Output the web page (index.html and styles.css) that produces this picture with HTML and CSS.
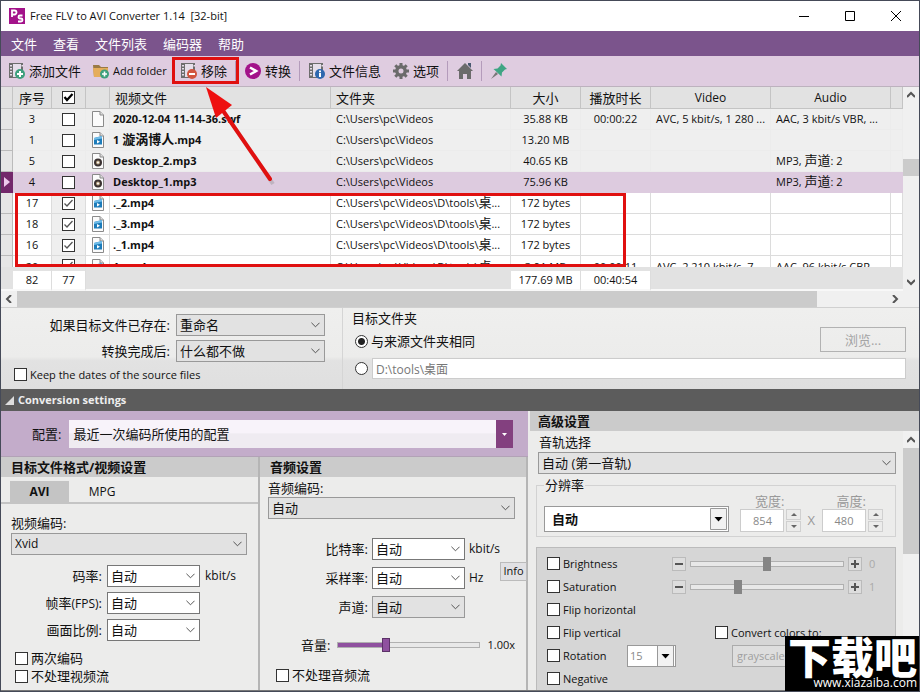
FILE: index.html
```html
<!DOCTYPE html>
<html lang="zh-CN">
<head>
<meta charset="utf-8">
<title>Free FLV to AVI Converter 1.14 [32-bit]</title>
<link rel="stylesheet" href="styles.css">
</head>
<body>
<svg class="defs" aria-hidden="true">
  <symbol id="i-page" viewBox="0 0 12 16"><path d="M.5.5h7.5l3.500 3.500v11.500H.5z" fill="#fbfbfb" stroke="#8a8a8a"/><path d="M8 .5v3.500h3.500" fill="#ddd" stroke="#8a8a8a"/></symbol>
  <symbol id="i-video" viewBox="0 0 12 16"><use href="#i-page"/><path d="M2 6l8-2v8.500H2z" fill="#1d7cba"/><path d="M2 6l8-2v2.500L2 8z" fill="#6fbce8"/><path d="M5 8v3.500l3-1.800z" fill="#fff"/></symbol>
  <symbol id="i-audio" viewBox="0 0 12 16"><use href="#i-page"/><circle cx="6" cy="9.500" r="4" fill="#3a3231"/><circle cx="6" cy="9.500" r="2" fill="#b9a27f"/><circle cx="6" cy="9.500" r="1" fill="#fff"/></symbol>
  <symbol id="i-film" viewBox="0 0 16 16"><path d="M0 0h14v15H0z" fill="#6d6d6d"/><path d="M4 1h8v13H4z" fill="#e6deea"/><path d="M1 2h2v1.500H1zM1 5h2v1.500H1zM1 8h2v1.500H1zM1 11h2v1.500H1zM12.500 2H14v1.500h-1.500z" fill="#e6deea"/></symbol>
</svg>
<div class="window">
  <header class="titlebar">
    <svg class="logo" viewBox="0 0 16 16" aria-hidden="true"><path d="M0 0h16v16H0z" fill="#a3128a"/><path d="M3 9V2.500h2.500a2 2 0 0 1 0 4H3M13.500 7.500H11a1.400 1.400 0 0 0 0 3h1a1.400 1.400 0 0 1 0 3H9" fill="none" stroke="#fff" stroke-width="1.800"/></svg>
    <h1 class="title">Free FLV to AVI Converter 1.14&nbsp; [32-bit]</h1>
    <div class="caption">
      <button aria-label="最小化"><svg viewBox="0 0 10 10"><path d="M0 5.500h10"/></svg></button>
      <button aria-label="最大化"><svg viewBox="0 0 10 10"><path d="M.5.5h9v9h-9z"/></svg></button>
      <button aria-label="关闭"><svg viewBox="0 0 10 10"><path d="M0 0l10 10M10 0L0 10"/></svg></button>
    </div>
  </header>
  <nav class="menu">
    <button>文件</button><button>查看</button><button>文件列表</button><button>编码器</button><button>帮助</button>
  </nav>
  <div class="toolbar">
    <button><svg viewBox="0 0 16 16"><use href="#i-film"/><circle cx="11" cy="11" r="5" fill="#3da07d"/><path d="M11 8v6M8 11h6" stroke="#fff" stroke-width="2"/></svg>添加文件</button>
    <button class="small folder"><svg viewBox="0 0 16 16"><path d="M0 2h6l2 2h7v10H1z" fill="#9b7a45"/><path d="M0 5h15v9H1z" fill="#e5ad5b"/><circle cx="11.500" cy="11" r="4.500" fill="#3da07d"/><path d="M11.500 8.500v5M9 11h5" stroke="#fff" stroke-width="1.600"/></svg>Add folder</button>
    <button class="marked"><svg viewBox="0 0 16 16"><use href="#i-film"/><circle cx="11" cy="11" r="5" fill="#d2553f"/><path d="M8 11h6" stroke="#fff" stroke-width="2"/></svg>移除
      <svg class="arrow" viewBox="0 0 80 110" aria-hidden="true"><path d="M17 18L72 99" stroke="#888" stroke-opacity=".35" stroke-width="4"/><path d="M16 17L69 94" stroke="#e01010" stroke-width="4" stroke-linecap="round"/><path d="M5 2l26 18-16 13z" fill="#ee1010"/></svg></button>
    <i class="sep"></i>
    <button><svg viewBox="0 0 16 16"><circle cx="8" cy="8" r="8" fill="#a3128a"/><path d="M5 4.500l6 3.500-6 3.500" fill="none" stroke="#fff" stroke-width="2.600"/></svg>转换</button>
    <i class="sep"></i>
    <button><svg viewBox="0 0 16 16"><use href="#i-film"/><circle cx="11" cy="11" r="5" fill="#2e67ae"/><path d="M11 7.500v1.800M11 10v4" stroke="#fff" stroke-width="2"/></svg>文件信息</button>
    <button><svg viewBox="0 0 16 16"><circle cx="8" cy="8" r="4.200" fill="none" stroke="#6b6b6b" stroke-width="3.400"/><path d="M8 0v3M8 13v3M0 8h3M13 8h3M2.300 2.300l2.200 2.200M11.500 11.500l2.200 2.200M2.300 13.700l2.200-2.200M11.500 4.500l2.200-2.200" stroke="#6b6b6b" stroke-width="3"/></svg>选项</button>
    <i class="sep"></i>
    <button aria-label="主页"><svg viewBox="0 0 16 16"><path d="M8 0l8 8h-2v8h-4v-5H6v5H2V8H0z" fill="#6b6b6b"/><path d="M11 0h3v5l-3-3z" fill="#48596f"/></svg></button>
    <i class="sep"></i>
    <button aria-label="固定"><svg viewBox="0 0 16 16"><path d="M0 16l5-7 2 2z" fill="#777"/><path d="M10 0l6 6-2 .5-3 3-.5 4L2.500 6l4-.500 3-3z" fill="#3fa584"/></svg></button>
  </div>

  <section class="files">
    <div class="list">
      <table>
        <colgroup><col class="c-mark"><col class="c-no"><col class="c-check"><col class="c-icon"><col class="c-file"><col class="c-folder"><col class="c-size"><col class="c-time"><col class="c-av"><col class="c-av"><col></colgroup>
        <thead><tr><th></th><th>序号</th><th><input type="checkbox" class="strong" checked aria-label="全选"></th><th></th><th class="left">视频文件</th><th class="left">文件夹</th><th>大小</th><th>播放时长</th><th class="small">Video</th><th class="small">Audio</th><th></th></tr></thead>
        <tbody>
          <tr class="off"><td></td><td>3</td><td><input type="checkbox" aria-label="3"></td><td><svg><use href="#i-page"/></svg></td><td class="name">2020-12-04 11-14-36.swf</td><td class="left">C:\Users\pc\Videos</td><td>35.88 KB</td><td>00:00:22</td><td class="left">AVC, 5 kbit/s, 1 280 ...</td><td class="left">AAC, 3 kbit/s VBR, ...</td><td></td></tr>
          <tr class="off"><td></td><td>1</td><td><input type="checkbox" aria-label="1"></td><td><svg><use href="#i-video"/></svg></td><td class="name">1 <span class="cjk">漩涡博人</span>.mp4</td><td class="left">C:\Users\pc\Videos</td><td>13.20 MB</td><td></td><td></td><td></td><td></td></tr>
          <tr class="off"><td></td><td>5</td><td><input type="checkbox" aria-label="5"></td><td><svg><use href="#i-audio"/></svg></td><td class="name">Desktop_2.mp3</td><td class="left">C:\Users\pc\Videos</td><td>40.65 KB</td><td></td><td></td><td class="left">MP3, <span class="cjk">声道</span>: 2</td><td></td></tr>
          <tr class="current"><td></td><td>4</td><td><input type="checkbox" aria-label="4"></td><td><svg><use href="#i-audio"/></svg></td><td class="name">Desktop_1.mp3</td><td class="left">C:\Users\pc\Videos</td><td>75.96 KB</td><td></td><td></td><td class="left">MP3, <span class="cjk">声道</span>: 2</td><td></td></tr>
          <tr><td></td><td>17</td><td><input type="checkbox" checked aria-label="17"></td><td><svg><use href="#i-video"/></svg></td><td class="name">._2.mp4</td><td class="left">C:\Users\pc\Videos\D\tools\<span class="cjk">桌</span>...</td><td>172 bytes</td><td></td><td></td><td></td><td></td></tr>
          <tr><td></td><td>18</td><td><input type="checkbox" checked aria-label="18"></td><td><svg><use href="#i-video"/></svg></td><td class="name">._3.mp4</td><td class="left">C:\Users\pc\Videos\D\tools\<span class="cjk">桌</span>...</td><td>172 bytes</td><td></td><td></td><td></td><td></td></tr>
          <tr><td></td><td>16</td><td><input type="checkbox" checked aria-label="16"></td><td><svg><use href="#i-video"/></svg></td><td class="name">._1.mp4</td><td class="left">C:\Users\pc\Videos\D\tools\<span class="cjk">桌</span>...</td><td>172 bytes</td><td></td><td></td><td></td><td></td></tr>
          <tr class="cut"><td></td><td><div>20</div></td><td><div><input type="checkbox" checked aria-label="20"></div></td><td><div><svg><use href="#i-video"/></svg></div></td><td class="name"><div>1.mp4</div></td><td class="left"><div>C:\Users\pc\Videos\D\tools\<span class="cjk">桌</span></div></td><td><div>3.91 MB</div></td><td><div>00:00:11</div></td><td class="left"><div>AVC, 2 210 kbit/s, 7...</div></td><td class="left"><div>AAC, 96 kbit/s CBR, ...</div></td><td></td></tr>
        </tbody>
        <tfoot><tr><td></td><td class="sum">82</td><td class="sum">77</td><td></td><td></td><td></td><td class="sum">177.69 MB</td><td class="sum">00:40:54</td><td></td><td></td><td></td></tr></tfoot>
      </table>
      <div class="row-mark"></div>
      <div class="hscroll"><svg viewBox="0 0 8 8"><path d="M6 0L2 4l4 4"/></svg><i></i><b></b><svg viewBox="0 0 8 8"><path d="M2 0l4 4-4 4"/></svg></div>
    </div>
    <div class="vscroll"><svg viewBox="0 0 8 8"><path d="M0 6l4-4 4 4"/></svg><i></i><b></b><svg viewBox="0 0 8 8"><path d="M0 2l4 4 4-4"/></svg></div>
  </section>

  <section class="output">
    <div class="actions">
      <label for="exists">如果目标文件已存在:</label><select id="exists"><option>重命名</option></select>
      <label for="after">转换完成后:</label><select id="after"><option>什么都不做</option></select>
      <label class="check small wide"><input type="checkbox">Keep the dates of the source files</label>
    </div>
    <div class="target">
      <div class="target-top">
        <div><h2>目标文件夹</h2><label class="check"><input type="radio" name="dir" checked>与来源文件夹相同</label></div>
        <button class="browse" disabled>浏览...</button>
      </div>
      <div class="path-row"><input type="radio" name="dir" aria-label="自定义文件夹"><input type="text" class="path" value="D:\tools\桌面" aria-label="路径"></div>
    </div>
  </section>

  <button class="settings-bar small"><svg viewBox="0 0 9 9"><path d="M9 0v9H0z"/></svg>Conversion settings</button>

  <main class="settings">
    <div class="main-col">
      <div class="profile">
        <label for="profile">配置:</label><select id="profile"><option>最近一次编码所使用的配置</option></select>
      </div>
      <div class="panes">
        <section class="pane video">
          <h2>目标文件格式/视频设置</h2>
          <div class="tabs latin"><button class="on">AVI</button><button>MPG</button></div>
          <div class="pane-body">
            <label for="vcodec">视频编码:</label>
            <select id="vcodec" class="full latin"><option>Xvid</option></select>
            <div class="fields">
              <label for="rate">码率:</label><select id="rate" class="white"><option>自动</option></select><span class="latin">kbit/s</span>
              <label for="fps">帧率<span class="latin">(FPS)</span>:</label><select id="fps" class="white"><option>自动</option></select><span></span>
              <label for="ratio">画面比例:</label><select id="ratio" class="white"><option>自动</option></select><span></span>
            </div>
            <label class="check"><input type="checkbox">两次编码</label>
            <label class="check"><input type="checkbox">不处理视频流</label>
          </div>
        </section>
        <section class="pane audio">
          <h2>音频设置</h2>
          <div class="pane-body">
            <label for="acodec">音频编码:</label>
            <select id="acodec" class="full"><option>自动</option></select>
            <div class="with-info">
              <div class="fields">
                <label for="abr">比特率:</label><select id="abr" class="white"><option>自动</option></select><span class="latin">kbit/s</span>
                <label for="hz">采样率:</label><select id="hz" class="white"><option>自动</option></select><span class="latin">Hz</span>
                <label for="ch">声道:</label><select id="ch"><option>自动</option></select><span></span>
              </div>
              <button class="info small">Info</button>
            </div>
            <div class="volume"><label for="vol">音量:</label><input id="vol" type="range" value="33"><span class="small">1.00x</span></div>
            <label class="check"><input type="checkbox">不处理音频流</label>
          </div>
        </section>
      </div>
    </div>
    <section class="advanced">
      <h2>高级设置</h2>
      <div class="adv-scroll">
        <div class="adv-body">
          <label for="track">音轨选择</label>
          <select id="track" class="full"><option>自动 (第一音轨)</option></select>
          <fieldset class="resolution">
            <legend>分辨率</legend>
            <select class="drop bold" aria-label="分辨率"><option>自动</option></select>
            <div class="dim"><label for="w">宽度:</label><div class="small"><input id="w" type="text" value="854" disabled><span class="spin"><button disabled aria-label="增加宽度"><svg viewBox="0 0 6 3"><path d="M0 3l3-3 3 3z"/></svg></button><button disabled aria-label="减少宽度"><svg viewBox="0 0 6 3"><path d="M0 0l3 3 3-3z"/></svg></button></span></div></div>
            <span class="times">X</span>
            <div class="dim"><label for="h">高度:</label><div class="small"><input id="h" type="text" value="480" disabled><span class="spin"><button disabled aria-label="增加高度"><svg viewBox="0 0 6 3"><path d="M0 3l3-3 3 3z"/></svg></button><button disabled aria-label="减少高度"><svg viewBox="0 0 6 3"><path d="M0 0l3 3 3-3z"/></svg></button></span></div></div>
          </fieldset>
          <div class="effects small">
            <div class="row"><label class="check"><input type="checkbox">Brightness</label><div class="adjust"><button disabled aria-label="减少"><svg viewBox="0 0 8 8"><path d="M0 4h8"/></svg></button><input type="range" value="50" disabled aria-label="Brightness"><button disabled aria-label="增加"><svg viewBox="0 0 8 8"><path d="M0 4h8M4 0v8"/></svg></button><span>0</span></div></div>
            <div class="row"><label class="check"><input type="checkbox">Saturation</label><div class="adjust"><button disabled aria-label="减少"><svg viewBox="0 0 8 8"><path d="M0 4h8"/></svg></button><input type="range" value="30" disabled aria-label="Saturation"><button disabled aria-label="增加"><svg viewBox="0 0 8 8"><path d="M0 4h8M4 0v8"/></svg></button><span>1</span></div></div>
            <div class="row"><label class="check"><input type="checkbox">Flip horizontal</label></div>
            <div class="row"><label class="check"><input type="checkbox">Flip vertical</label><label class="check second"><input type="checkbox">Convert colors to:</label></div>
            <div class="row"><label class="check"><input type="checkbox">Rotation</label><select class="drop angle" aria-label="Rotation"><option>15</option></select><select class="colors" disabled aria-label="Convert colors to"><option>grayscale</option></select></div>
            <div class="row"><label class="check"><input type="checkbox">Negative</label></div>
          </div>
        </div>
        <div class="vscroll adv-bar"><svg viewBox="0 0 8 8"><path d="M0 6l4-4 4 4"/></svg><b></b></div>
      </div>
    </section>
  </main>
  <div class="watermark"><strong>下载吧</strong><span>www.xiazaiba.com</span></div>
</div>
</body>
</html>
```
FILE: styles.css
```css
* { box-sizing: border-box; }
body {
  margin: 0;
  font: 13px/16px "Open Sans", "Noto Sans CJK SC", sans-serif;
  color: #111;
  background: #ececeb;
}
button, input, select { font: inherit; color: inherit; margin: 0; }
button { border: 0; padding: 0; background: none; }
h1, h2 { margin: 0; font-size: inherit; }
svg { display: block; }
.defs { position: absolute; width: 0; height: 0; }
.latin { font-size: 12px; }
.small { font-size: 11px; }
.cjk { font-size: 13px; line-height: 12px; }
.window {
  position: relative;
  display: flex;
  flex-direction: column;
  min-height: 100vh;
  border: 1px solid #454a58;
  overflow: hidden;
}

.titlebar { display: flex; align-items: center; height: 30px; padding-left: 8px; background: #fff; }
.logo { width: 16px; height: 16px; margin-right: 5px; }
.title { flex: 1; font-size: 11px; font-weight: 400; }
.caption { display: flex; }
.caption button { display: grid; place-items: center; width: 46px; height: 30px; }
.caption svg { width: 10px; height: 10px; fill: none; stroke: #000; overflow: visible; }
.menu { display: flex; height: 25px; padding-left: 2px; background: #7b548c; color: #fff; }
.menu button { padding: 0 8px; }
.toolbar { display: flex; align-items: center; height: 31px; padding-left: 2px; background: #dfcce0; border-bottom: 1px solid #bdb2be; }
.toolbar button { position: relative; display: flex; align-items: center; gap: 4px; height: 26px; padding: 0 6px; white-space: nowrap; }
.toolbar .folder { min-width: 88px; }
.toolbar button > svg { width: 16px; height: 16px; }
.sep { width: 1px; height: 20px; margin: 0 3px 0 2px; background: #b49bbb; }
.marked::after { content: ""; position: absolute; inset: -1px -6px 0 -3px; border: 3px solid #e01010; }
.toolbar .marked .arrow { position: absolute; left: 26px; top: 27px; width: 80px; height: 110px; fill: none; z-index: 2; }

.files { display: flex; border-bottom: 1px solid #d0d0d0; }
.list { position: relative; flex: 1; min-width: 0; }
table { width: 100%; border-collapse: separate; border-spacing: 0; table-layout: fixed; background: #e2e2e2; }
.c-mark { width: 12px; }
.c-no { width: 39px; }
.c-check { width: 34px; }
.c-icon { width: 24px; }
.c-file { width: 221px; }
.c-folder { width: 180px; }
.c-size, .c-time { width: 70px; }
.c-av { width: 120px; }
th, td { padding: 0; text-align: center; white-space: nowrap; border-right: 1px solid #dcdcdc; border-bottom: 1px solid #dcdcdc; }
th { height: 22px; font-weight: 400; background: #e2e2e2; border-color: #c4c4c4; }
th.small { font-size: 12px; }
td { height: 21px; font-size: 11px; line-height: 16px; background: #fff; }
th.left, td.left { text-align: left; padding-left: 5px; }
td.name { text-align: left; padding-left: 3px; font-weight: 700; }
td svg { width: 12px; height: 16px; margin: 0 auto; }
td input, th input { display: block; margin: 0 auto; }
tbody td:first-child { background: #e6e6e6; border-color: #bbb; }
tbody td:nth-child(3), .off td { background: #efefef; }
.off td { border-color: #ececec; }
.current td, .current td:nth-child(3) { background: #ddcbdf; border-color: #ddcbdf; }
.current td:first-child { background: #73286b; border-color: #73286b; position: relative; }
.current td:first-child::before { content: ""; position: absolute; left: 3px; top: 5px; border: 5px solid transparent; border-left: 6px solid #eec9ec; border-right: 0; }
.cut td { height: 11px; border-bottom: 0; }
.cut div { height: 11px; padding-top: 3px; overflow: hidden; }
tfoot td { height: 24px; background: #e2e2e2; border: 0; border-bottom: 2px solid #f8f8f8; }
tfoot .sum { background: #fff; border-top: 4px solid #e2e2e2; border-right: 1px solid #ddd; }
.row-mark { position: absolute; left: 14px; right: 277px; top: 106px; height: 74px; border: 3px solid #e01010; }
.hscroll { display: flex; align-items: center; height: 16px; background: #f0f0f0; }
.hscroll i { flex: 797; height: 16px; background: #cbcbcb; }
.hscroll b { flex: 70; }
.hscroll svg, .vscroll svg { width: 8px; height: 8px; margin: 4px; fill: none; stroke: #555; stroke-width: 2; flex: none; }
.vscroll { display: flex; flex-direction: column; width: 16px; background: #f0f0f0; }
.vscroll i { flex: 1; }
.files .vscroll { padding-bottom: 17px; background: linear-gradient(#cbcbcb, #cbcbcb) 0 72px / 16px 17px no-repeat #f0f0f0; }

input[type="checkbox"], input[type="radio"] { appearance: none; flex: none; width: 13px; height: 13px; border: 1px solid #333; background: #fff; }
input[type="radio"] { border-radius: 50%; }
input[type="radio"]:checked { background: radial-gradient(circle, #222 3px, #fff 4px); }
input[type="checkbox"]:checked { background: #fff url("data:image/svg+xml,%3Csvg xmlns='http://www.w3.org/2000/svg' viewBox='0 0 11 11'%3E%3Cpath d='M1.500 5.500l2.500 2.500 5.500-6' fill='none' stroke='%23555' stroke-width='1.300'/%3E%3C/svg%3E"); }
input.strong:checked { background-image: url("data:image/svg+xml,%3Csvg xmlns='http://www.w3.org/2000/svg' viewBox='0 0 11 11'%3E%3Cpath d='M1.500 5l2.500 3 5.500-6' fill='none' stroke='%23000' stroke-width='2.200'/%3E%3C/svg%3E"); }
.check { display: flex; align-items: center; gap: 3px; white-space: nowrap; }
select {
  appearance: none;
  height: 22px;
  padding: 0 20px 0 3px;
  border: 1px solid #999;
  border-radius: 0;
  background: #e2e2e2 url("data:image/svg+xml,%3Csvg xmlns='http://www.w3.org/2000/svg' viewBox='0 0 10 6'%3E%3Cpath d='M.5.5L5 5 9.500.5' fill='none' stroke='%23444'/%3E%3C/svg%3E") right 4px center / 9px 6px no-repeat;
}
.white { background-color: #fff; border-color: #777; }
.full { width: 100%; }

.output { display: flex; background: linear-gradient(#efefee, #ececeb 60%, #e2e2e2 65%, #dfdfdf); }
.actions { display: grid; grid-template-columns: 162px 149px; gap: 4px 6px; align-content: start; align-items: center; padding: 6px 17px 6px 7px; border-right: 1px solid #d5d5d5; }
.actions > label { text-align: right; }
.actions .wide { grid-column: 1 / -1; padding-left: 6px; height: 17px; }
.target { flex: 1; padding: 2px 13px 9px 9px; }
.target-top { display: flex; justify-content: space-between; align-items: flex-end; }
.target h2 { font-weight: 400; line-height: 16px; margin-bottom: 7px; }
.target .check { margin-bottom: 3px; }
.target .check, .path-row { padding-left: 3px; }
.browse { width: 86px; height: 25px; border: 1px solid #b2b2b2; color: #a4a4a4; }
.path-row { display: flex; align-items: center; gap: 4px; padding-top: 6px; }
.path { flex: 1; height: 21px; padding: 0 3px; border: 1px solid #ccc; background: #fff; color: #777; font-size: 12px; }

.settings-bar { display: flex; align-items: center; gap: 4px; height: 22px; padding-left: 4px; background: #5c5c5c; color: #eee; font-weight: 700; }
.settings-bar svg { width: 9px; height: 9px; fill: #ddd; }
.settings { flex: 1; display: grid; grid-template-columns: 527fr 391fr; border-bottom: 1px solid #777; }
.settings h2 { height: 20px; padding-left: 10px; background: #cbcbcb; line-height: 20px; font-size: 13px; }
.main-col { display: flex; flex-direction: column; min-width: 0; }
.profile { display: flex; align-items: center; gap: 8px; height: 46px; padding: 0 15px 0 31px; background: #c3acca; border-bottom: 1px solid #b2a2b6; }
.profile select { flex: 1; height: 28px; border: 0; padding-left: 4px; background: url("data:image/svg+xml,%3Csvg xmlns='http://www.w3.org/2000/svg' viewBox='0 0 17 28'%3E%3Cpath d='M0 0h17v28H0z' fill='%2383407f'/%3E%3Cpath d='M6 13h5l-2.500 3z' fill='%23fff'/%3E%3C/svg%3E") right / 17px 28px no-repeat, linear-gradient(#f8f3fa 45%, #efebf1 50%); }
.panes { flex: 1; display: grid; grid-template-columns: 259fr 268fr; }
.pane { border-right: 2px solid #b5b5b5; min-width: 0; }
.tabs { display: flex; margin-top: 4px; padding-left: 9px; border-bottom: 2px solid #c4c4c4; }
.tabs button { width: 59px; height: 21px; }
.tabs button + button { width: 66px; }
.tabs .on { background: #c4c4c4; font-weight: 700; }
.pane-body { padding: 0 11px 0 10px; }
.pane-body > label:first-child { display: block; padding-top: 11px; margin-bottom: 2px; }
.fields { display: grid; grid-template-columns: 91px 93px 1fr; gap: 5px; align-items: center; margin: 10px 0 8px; }
.fields label { text-align: right; white-space: nowrap; }
.video .check { height: 18px; padding-left: 4px; }
.audio .pane-body { padding: 0 11px 0 8px; }
.audio .pane-body > label:first-child { padding-top: 3px; margin-bottom: 1px; }
.audio .fields { grid-template-columns: 100px 93px 1fr; gap: 7px 4px; margin: 19px 0; flex: 1; }
.with-info { display: flex; align-items: center; margin-right: -6px; }
.info { width: 27px; height: 19px; margin-bottom: 14px; border: 1px solid #bbb; background: #e1e1e4; }
.with-info .info { margin-right: 1px; flex: none; }
.volume { display: flex; align-items: center; gap: 7px; padding-left: 33px; margin-bottom: 14px; }
.volume input { flex: 1; min-width: 0; }
.audio .check { padding-left: 8px; }
input[type="range"] { appearance: none; height: 16px; background: none; }
input[type="range"]::-webkit-slider-runnable-track { height: 6px; border: 1px solid #b0b0b0; background: #e8e8e8; }
input[type="range"]::-webkit-slider-thumb { appearance: none; width: 8px; height: 14px; margin-top: -5px; background: #858585; }
#vol::-webkit-slider-runnable-track { background: linear-gradient(90deg, #8f519f 33%, #e8e8e8 33%); }
#vol::-webkit-slider-thumb { background: #8f519f; border: 1px solid #5c3268; }

.advanced { display: flex; flex-direction: column; min-width: 0; margin-left: 2px; }
.advanced h2 { padding-left: 8px; }
.adv-scroll { display: flex; flex: 1; }
.adv-body { display: flex; flex-direction: column; flex: 1; min-width: 0; padding: 3px 7px 0 6px; }
.adv-body > label { display: block; padding-left: 3px; margin-bottom: 2px; }
.adv-body > .full { margin-left: 2px; width: calc(100% - 2px); }
.adv-bar svg { margin-top: 5px; }
.adv-bar b { height: 106px; background: #cbcbcb; }
.resolution { display: flex; align-items: flex-end; height: 60px; margin: 3px 0 10px; padding: 0 12px 8px 7px; border: 1px solid #d2d2d2; min-width: 0; }
.resolution legend { padding: 0 1px; }
.drop { background: #fff url("data:image/svg+xml,%3Csvg xmlns='http://www.w3.org/2000/svg' viewBox='0 0 17 22'%3E%3Cpath d='M.5.5h16v21H.5z' fill='%23f2f2f2' stroke='%23999'/%3E%3Cpath d='M4.500 9h8l-4 4.500z'/%3E%3C/svg%3E") right 1px center / 17px 22px no-repeat; }
.bold { flex: 1; height: 26px; padding-left: 7px; font-weight: 700; }
.dim { margin-left: 11px; color: #999; }
.dim label { display: block; width: 44px; text-align: right; }
.dim > div { display: flex; gap: 2px; }
.dim input { width: 44px; height: 23px; padding: 0; text-align: center; border: 1px solid #ccc; background: #fff; color: #888; }
.spin { display: flex; flex-direction: column; gap: 1px; }
.spin button { display: grid; place-items: center; width: 15px; height: 11px; border: 1px solid #d0d0d0; }
.spin svg { width: 6px; height: 3px; fill: #666; }
.times { margin: 0 0 4px 6px; color: #999; }
.times + .dim { margin-left: 7px; }
.effects { flex: 1; padding: 4px 10px 0; border: 1px solid #bbb; border-bottom: 0; background: #d6d6d6; }
.row { display: flex; align-items: center; height: 23px; }
.row .check:first-child { width: 125px; }
.adjust { flex: 1; display: flex; align-items: center; gap: 4px; color: #aaa; }
.adjust input { flex: 1; min-width: 0; }
.adjust button { display: grid; place-items: center; width: 14px; height: 14px; border: 1px solid #bbb; background: #ddd; }
.adjust svg { width: 8px; height: 8px; stroke: #555; stroke-width: 2; }
.adjust span { width: 19px; padding-left: 3px; }
.second { margin-left: 43px; }
.row .angle { width: 49px; margin-left: -45px; color: #888; padding-left: 2px; }
.row .colors { flex: 1; margin-left: 56px; margin-right: 14px; color: #888; padding-left: 4px; }

.watermark { position: absolute; right: -1px; bottom: -1px; width: 135px; height: 56px; background: #000; color: #fff; text-align: right; overflow: hidden; }
.watermark strong { display: block; text-align: center; font: 900 43px/38px "Noto Sans CJK SC", sans-serif; }
.watermark span { display: block; font-size: 12px; line-height: 18px; padding-right: 3px; }
```
